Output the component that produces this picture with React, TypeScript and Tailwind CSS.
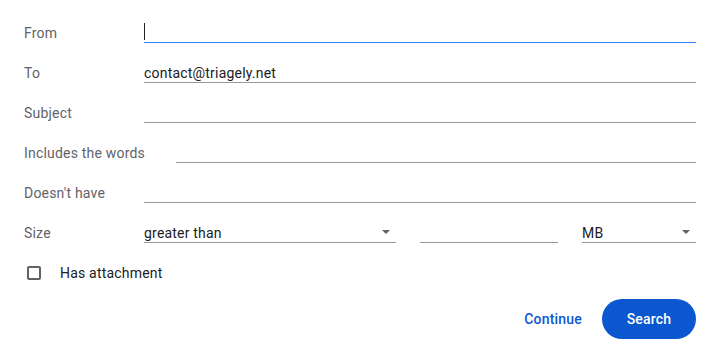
import React from "react";

function Row({ label, children }: { label: string; children: React.ReactNode }) {
  return (
    <div className="flex h-10 items-center">
      <span className="shrink-0 text-[14px] text-[#5f6368]">{label}</span>
      {children}
    </div>
  );
}

function Field({ value, focused, className }: { value?: string; focused?: boolean; className?: string }) {
  return (
    <div
      className={`flex h-5 items-center border-b ${focused ? "border-[#3b82f6]" : "border-[#9a9a9a]"} ${className ?? ""}`}
    >
      {focused && <span className="mb-[2px] h-[17px] w-px bg-[#202124]" />}
      {value && <span className="text-[14px] leading-5 text-[#202124]">{value}</span>}
    </div>
  );
}

function Select({ value, className }: { value: string; className?: string }) {
  return (
    <div className={`flex h-5 items-center justify-between border-b border-[#9a9a9a] ${className ?? ""}`}>
      <span className="text-[14px] leading-5 text-[#202124]">{value}</span>
      <svg width="8" height="4" viewBox="0 0 8 4" className="mr-[6px] mt-[-2px]">
        <path d="M0 0h8L4 4z" fill="#5f6368" />
      </svg>
    </div>
  );
}

export default function App() {
  return (
    <div
      className="h-[357px] w-[720px] bg-white pl-6 pr-6 pt-[13px] tracking-[0.2px]"
      style={{ fontFamily: "Roboto, 'Noto Sans', Arial, sans-serif" }}
    >
      <Row label="From">
        <Field focused className="ml-auto w-[552px]" />
      </Row>
      <Row label="To">
        <Field value="contact@triagely.net" className="ml-auto w-[552px]" />
      </Row>
      <Row label="Subject">
        <Field className="ml-auto w-[552px]" />
      </Row>
      <Row label="Includes the words">
        <Field className="ml-auto w-[520px]" />
      </Row>
      <Row label="Doesn't have">
        <Field className="ml-auto w-[552px]" />
      </Row>
      <Row label="Size">
        <div className="ml-auto flex w-[552px] gap-6">
          <Select value="greater than" className="w-[252px]" />
          <Field className="w-[138px]" />
          <Select value="MB" className="flex-1" />
        </div>
      </Row>
      <div className="flex h-10 items-center">
        <span className="ml-[3px] h-[14px] w-[14px] rounded-[2px] border-2 border-[#5f6368]" />
        <span className="ml-[19px] text-[14px] text-[#202124]">Has attachment</span>
      </div>
      <div className="mt-[6px] flex items-center justify-end">
        <button className="h-10 rounded-full px-3 text-[14px] font-medium text-[#0b57d0]">Continue</button>
        <button className="ml-[8px] h-10 w-[94px] rounded-full bg-[#0b57d0] text-[14px] font-medium text-white">
          Search
        </button>
      </div>
    </div>
  );
}
